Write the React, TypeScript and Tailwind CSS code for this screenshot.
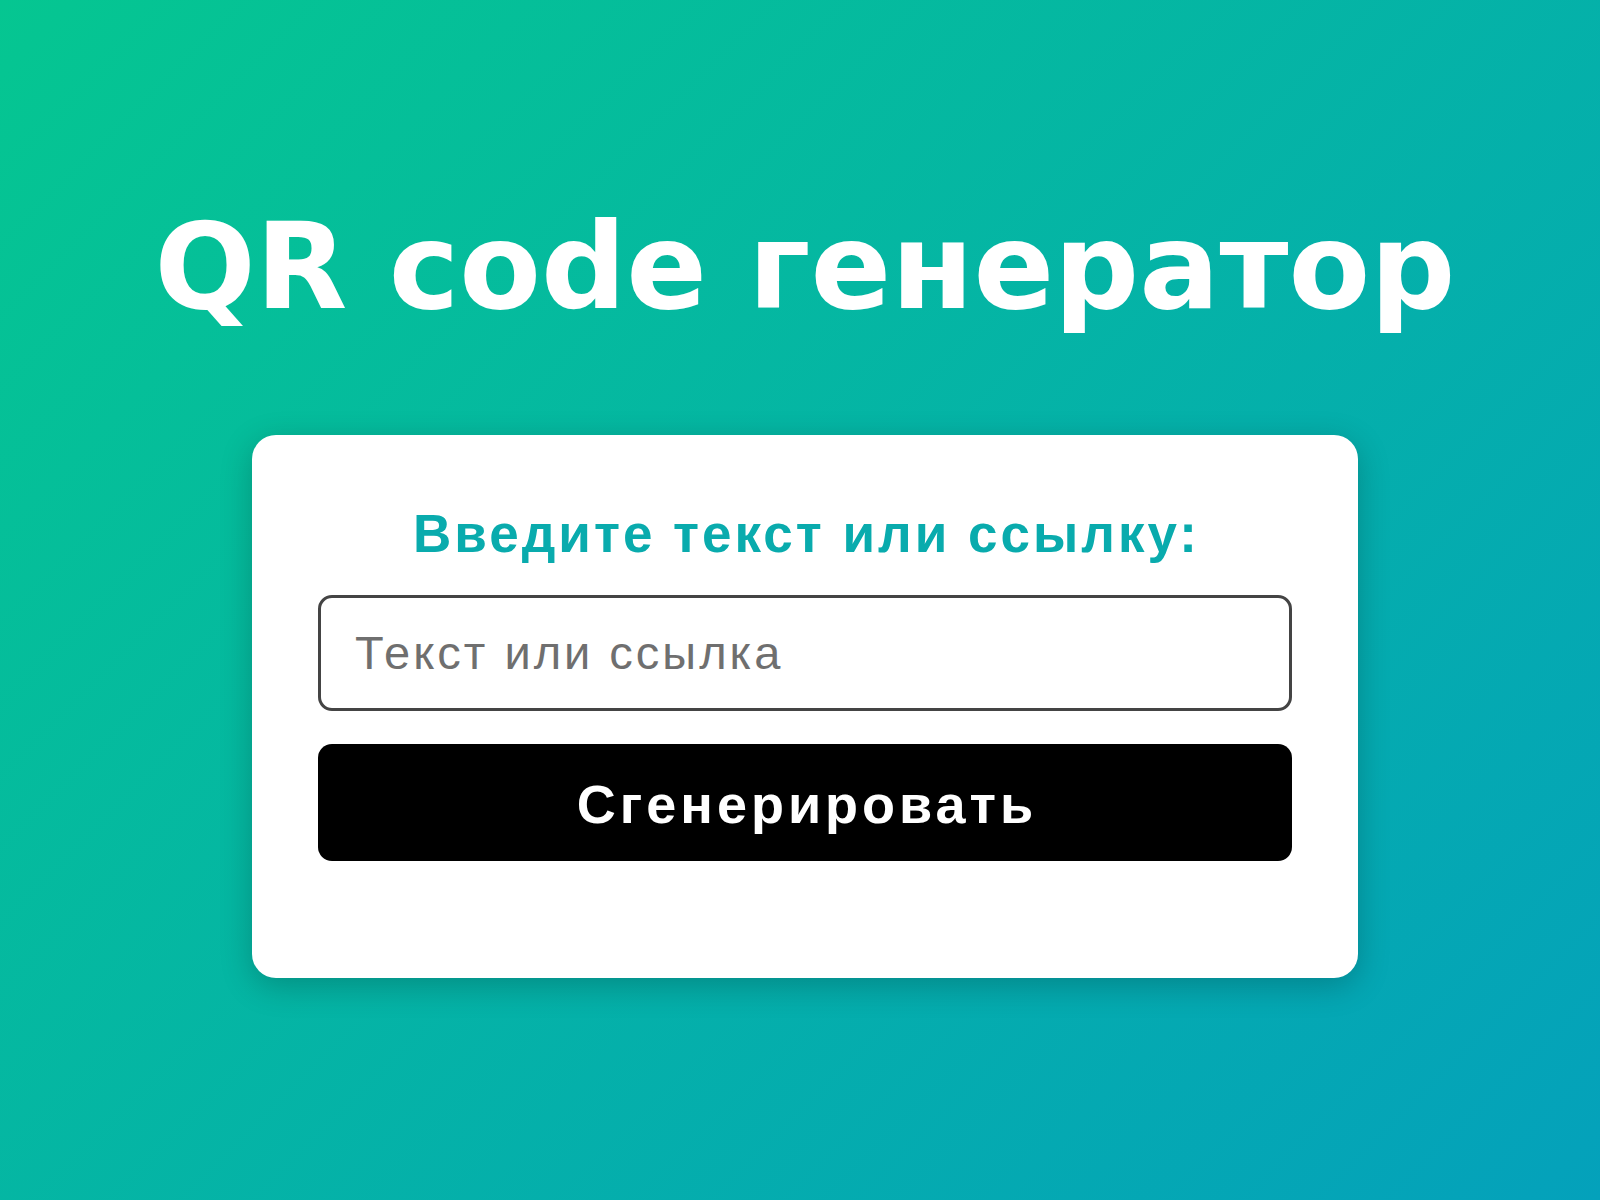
import { useState } from "react";

export default function App() {
  const [text, setText] = useState("");

  return (
    <div className="min-h-screen w-full bg-[linear-gradient(135deg,#05c691_0%,#04a1bb_100%)] font-['Liberation_Sans',Arial,sans-serif]">
      <div className="flex flex-col items-center pl-[10px] pt-[208px]">
        <h1 className="font-['DejaVu_Sans',sans-serif] text-[119px] font-bold leading-none text-white">
          QR code генератор
        </h1>

        <div className="mt-[108px] w-[1106px] rounded-[24px] bg-white px-[66px] pt-[69px] pb-[117px] shadow-[0_8px_32px_rgba(0,0,0,0.22)]">
          <p className="pl-[3px] text-center text-[53px] font-bold leading-[1.15] tracking-[3px] text-[#09abad]">
            Введите текст или ссылку:
          </p>
          <input
            type="text"
            value={text}
            onChange={(e) => setText(e.target.value)}
            placeholder="Текст или ссылка"
            className="mt-[30px] block h-[116px] w-full rounded-[14px] border-[3px] border-[#444444] bg-white px-[34px] text-[47px] tracking-[3px] text-[#333] outline-none placeholder:text-[#6f6f6f]"
          />
          <button
            type="button"
            className="mt-[33px] flex h-[117px] w-full items-center justify-center rounded-[14px] bg-black pt-[5px] pl-[4px] text-[54px] font-bold tracking-[4px] text-white"
          >
            Сгенерировать
          </button>
        </div>
      </div>
    </div>
  );
}
